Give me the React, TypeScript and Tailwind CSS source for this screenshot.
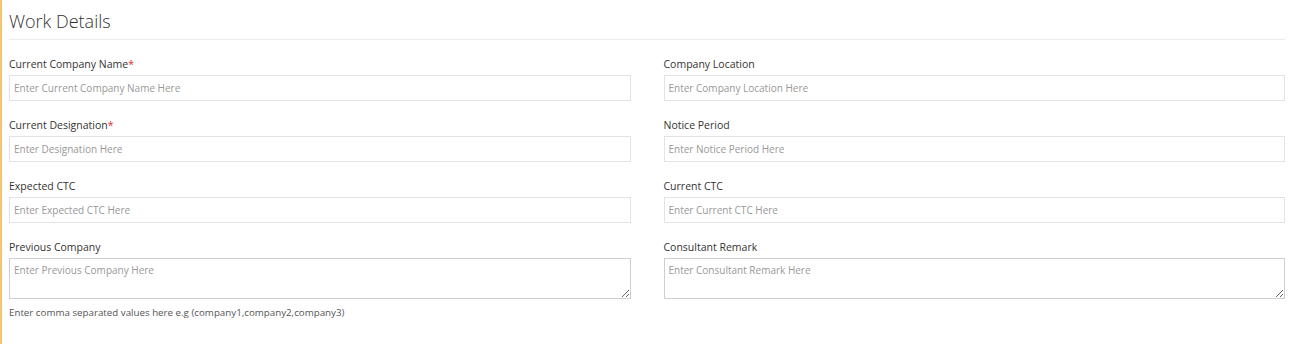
import React from 'react';

type Field = {
  label: string;
  placeholder: string;
  required?: boolean;
  textarea?: boolean;
  help?: string;
};

const fields: Field[] = [
  { label: 'Current Company Name', placeholder: 'Enter Current Company Name Here', required: true },
  { label: 'Company Location', placeholder: 'Enter Company Location Here' },
  { label: 'Current Designation', placeholder: 'Enter Designation Here', required: true },
  { label: 'Notice Period', placeholder: 'Enter Notice Period Here' },
  { label: 'Expected CTC', placeholder: 'Enter Expected CTC Here' },
  { label: 'Current CTC', placeholder: 'Enter Current CTC Here' },
  {
    label: 'Previous Company',
    placeholder: 'Enter Previous Company Here',
    textarea: true,
    help: 'Enter comma separated values here e.g (company1,company2,company3)',
  },
  { label: 'Consultant Remark', placeholder: 'Enter Consultant Remark Here', textarea: true },
];

const FormField = ({ field }: { field: Field }) => (
  <div className="flex flex-col mb-[13px]">
    <label className="text-[10.5px] leading-[22px] text-[#333]">
      {field.label}
      {field.required && <span className="text-[#e32b2b]">*</span>}
    </label>
    {field.textarea ? (
      <textarea
        placeholder={field.placeholder}
        className="h-[41px] w-full border border-[#cfcfcf] px-[4px] py-[3px] text-[10px] leading-[16px] text-[#555] placeholder:text-[#999] outline-none"
      />
    ) : (
      <input
        type="text"
        placeholder={field.placeholder}
        className="h-[26px] w-full border border-[#e3e3e3] px-[4px] text-[10px] text-[#555] placeholder:text-[#999] outline-none"
      />
    )}
    {field.help && (
      <p className="mt-[7px] text-[9.75px] leading-[14px] text-[#555]">{field.help}</p>
    )}
  </div>
);

const App = () => {
  return (
    <div
      className="min-h-[344px] bg-white border-l-2 border-[#f7c56c] pl-[7px] pr-[4px] pt-[7px]"
      style={{ fontFamily: '"Open Sans", "Liberation Sans", sans-serif' }}
    >
      <div className="border-b border-[#ebebeb] pb-[4px] mb-[13px]">
        <h2 className="text-[18px] leading-[28px] font-light text-[#333]">Work Details</h2>
      </div>
      <div className="grid grid-cols-2 gap-x-[33px] items-start">
        {fields.map((f) => (
          <FormField key={f.label} field={f} />
        ))}
      </div>
    </div>
  );
};

export default App;
